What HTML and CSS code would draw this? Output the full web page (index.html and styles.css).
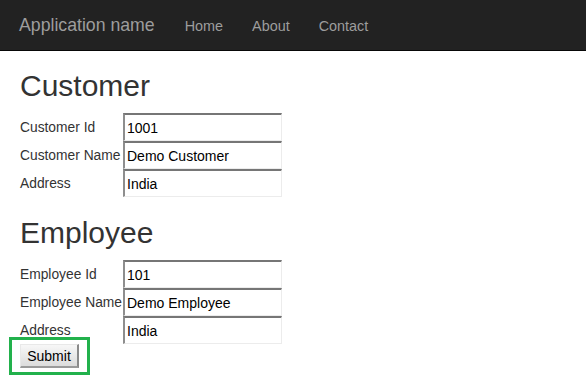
FILE: index.html
```html
<!DOCTYPE html>
<html>

<head>
    <meta charset="utf-8">
    <title>Application name</title>
    <link rel="stylesheet" href="styles.css">
</head>

<body>
    <header class="navbar">
        <a class="brand" href="#">Application name</a>
        <nav class="nav">
            <a href="#">Home</a>
            <a href="#">About</a>
            <a href="#">Contact</a>
        </nav>
    </header>

    <main class="content">
        <form>
            <h2>Customer</h2>
            <div class="fields">
                <label for="cust_id">Customer Id</label>
                <input id="cust_id" type="text" value="1001">
                <label for="cust_name">Customer Name</label>
                <input id="cust_name" type="text" value="Demo Customer">
                <label for="cust_addr">Address</label>
                <input id="cust_addr" type="text" value="India">
            </div>

            <h2 class="second">Employee</h2>
            <div class="fields">
                <label for="emp_id">Employee Id</label>
                <input id="emp_id" type="text" value="101">
                <label for="emp_name">Employee Name</label>
                <input id="emp_name" type="text" value="Demo Employee">
                <label for="emp_addr">Address</label>
                <input id="emp_addr" type="text" value="India">
            </div>

            <!-- green box marks the button -->
            <div class="actions">
                <button class="submit" type="submit">Submit</button>
            </div>
        </form>
    </main>
</body>

</html>
```

FILE: styles.css
```css
html {
    font-family: "Liberation Sans", Arial, sans-serif;
}

body {
    margin: 0;
    min-height: 392px;
    color: #333;
    background: #fff;
}

.navbar {
    display: flex;
    align-items: center;
    height: 50px;
    padding: 0 19px;
    background-color: #222;
    border-bottom: 1px solid #080808;
}

.brand {
    font-size: 17.7px;
    color: #9d9d9d;
    text-decoration: none;
}

.nav {
    display: flex;
    margin-left: 30px;
    padding-top: 1px;
}

.nav a {
    font-size: 14.4px;
    color: #9d9d9d;
    text-decoration: none;
    padding-right: 14.5px;
}

.nav a + a {
    padding-left: 14.5px;
}

.content {
    padding: 0 20px 24px;
}

form {
    margin: 0;
}

h2 {
    font-size: 30px;
    font-weight: normal;
    line-height: 33px;
    margin: 18px 0 11px;
    color: #333;
}

h2.second {
    margin-top: 19px;
}

.fields {
    display: grid;
    grid-template-columns: 103px 159px;
    grid-auto-rows: 28px;
    align-items: center;
}

.fields label {
    font-size: 13.8px;
    white-space: nowrap;
    padding-top: 1px;
}

.fields input {
    box-sizing: border-box;
    width: 159px;
    height: 28px;
    margin: 0;
    padding: 1px 2px 0;
    font-family: "Liberation Sans", Arial, sans-serif;
    font-size: 14px;
    color: #000;
    background: #fff;
    border-style: solid;
    border-width: 2px 1px 1px 2px;
    border-color: #767676 #ececec #ececec #8e8e8e;
    outline: none;
}

.actions {
    position: relative;
    display: inline-block;
    vertical-align: top;
}

.actions::after {
    content: '';
    position: absolute;
    top: -7px;
    bottom: -7px;
    left: -11px;
    right: -11px;
    border: 3px solid #22b14c;
    pointer-events: none;
}

.submit {
    display: block;
    width: 59px;
    height: 24px;
    margin: 0;
    padding: 0;
    font-family: "Liberation Sans", Arial, sans-serif;
    font-size: 14px;
    color: #000;
    background: linear-gradient(#f7f7f7, #dcdcdc);
    border-style: solid;
    border-width: 1px 2px 2px 1px;
    border-color: #e8e8e8 #8a8a8a #9a9a9a #e8e8e8;
}
```
